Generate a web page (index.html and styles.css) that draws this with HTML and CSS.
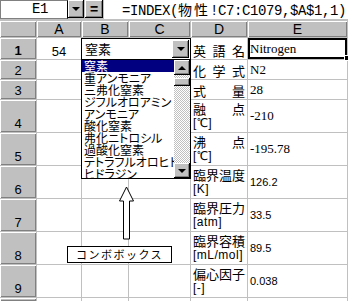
FILE: index.html
```html
<!DOCTYPE html>
<html lang="ja">
<head>
    <meta charset="UTF-8">
    <title>物性</title>
    <link rel="stylesheet" href="styles.css">
</head>
<body>
    <div class="bar">
        <div class="namebox">E1</div>
        <div class="btn drop"><span class="tri-down"></span></div>
        <div class="btn eq">=</div>
        <div class="formula">=INDEX(<span class="cjk">物性</span>!C7:C1079,$A$1,1)</div>
    </div>

    <div class="sheet">
        <div class="grid">
            <div class="hd"></div>
            <div class="hd">A</div>
            <div class="hd">B</div>
            <div class="hd">C</div>
            <div class="hd">D</div>
            <div class="hd">E</div>

            <div class="rh act">1</div>
            <div class="c num">54</div>
            <div class="c"></div>
            <div class="c"></div>
            <div class="c lbl"><span class="wide">英語名</span></div>
            <div class="c val sel">Nitrogen</div>

            <div class="rh">2</div>
            <div class="c"></div><div class="c"></div><div class="c"></div>
            <div class="c lbl"><span class="wide">化学式</span></div>
            <div class="c val">N2</div>

            <div class="rh">3</div>
            <div class="c"></div><div class="c"></div><div class="c"></div>
            <div class="c lbl">式　　量</div>
            <div class="c val">28</div>

            <div class="rh">4</div>
            <div class="c"></div><div class="c"></div><div class="c"></div>
            <div class="c lbl two">融　　点<span class="unit">[℃]</span></div>
            <div class="c val">-210</div>

            <div class="rh">5</div>
            <div class="c"></div><div class="c"></div><div class="c"></div>
            <div class="c lbl two">沸　　点<span class="unit">[℃]</span></div>
            <div class="c val">-195.78</div>

            <div class="rh">6</div>
            <div class="c"></div><div class="c"></div><div class="c"></div>
            <div class="c lbl two">臨界温度<span class="unit">[K]</span></div>
            <div class="c val sans">126.2</div>

            <div class="rh">7</div>
            <div class="c"></div><div class="c"></div><div class="c"></div>
            <div class="c lbl two">臨界圧力<span class="unit">[atm]</span></div>
            <div class="c val sans">33.5</div>

            <div class="rh">8</div>
            <div class="c"></div><div class="c"></div><div class="c"></div>
            <div class="c lbl two">臨界容積<span class="unit">[mL/mol]</span></div>
            <div class="c val sans">89.5</div>

            <div class="rh">9</div>
            <div class="c"></div><div class="c"></div><div class="c"></div>
            <div class="c lbl two">偏心因子<span class="unit">[-]</span></div>
            <div class="c val sans">0.038</div>

            <div class="rh"></div>
            <div class="c"></div><div class="c"></div><div class="c"></div><div class="c"></div><div class="c"></div>
        </div>

        <!-- fill handle of the active cell -->
        <div class="handle"></div>

        <!-- combo box placed over B1:C1 -->
        <div class="combo">
            <div class="combo-text">窒素</div>
            <div class="btn combo-btn"><span class="tri-down"></span></div>
        </div>
        <div class="list">
            <div class="items">
                <div class="item on">窒素</div>
                <div class="item">重アンモニア</div>
                <div class="item">三弗化窒素</div>
                <div class="item">ジフルオロアミン</div>
                <div class="item">アンモニア</div>
                <div class="item">酸化窒素</div>
                <div class="item">弗化ニトロシル</div>
                <div class="item">過酸化窒素</div>
                <div class="item">テトラフルオロヒドラジン</div>
                <div class="item">ヒドラジン</div>
            </div>
            <div class="scroll">
                <div class="btn sb-btn"><span class="tri-up"></span></div>
                <div class="track">
                    <div class="btn thumb"></div>
                </div>
                <div class="btn sb-btn"><span class="tri-down"></span></div>
            </div>
        </div>

        <svg class="arrow" width="348" height="281" viewBox="0 0 348 281">
            <polygon points="126.5,167 133.5,181 129.5,181 129.5,219 123.5,219 123.5,181 119.5,181"
                     fill="#fff" stroke="#000" stroke-width="1"/>
        </svg>
        <div class="callout">コンボボックス</div>
    </div>
</body>
</html>
```

FILE: styles.css
```css
body {
    margin: 0;
    width: 348px;
    height: 301px;
    overflow: hidden;
    background: #fff;
    font-family: "Noto Sans CJK JP", sans-serif;
    color: #000;
}

/* formula bar */
.bar {
    display: flex;
    height: 20px;
    background: #c0c0c0;
}
.namebox {
    width: 68px;
    height: 19px;
    box-sizing: border-box;
    background: #fff;
    border: 1px solid #808080;
    border-right-color: #000;
    padding-left: 31px;
    font: 14px/17px "Liberation Mono", monospace;
    letter-spacing: -0.4px;
}
.btn {
    background: #c0c0c0;
    box-shadow: inset -1px -1px #000, inset 1px 1px #fff, inset -2px -2px #808080;
    display: flex;
    align-items: center;
    justify-content: center;
    box-sizing: border-box;
}
.drop {
    width: 16px;
    height: 18px;
}
.eq {
    width: 18px;
    height: 18px;
    margin-left: 1px;
    font: bold 14px "Liberation Sans", sans-serif;
}
.formula {
    flex: 1;
    height: 19px;
    margin-left: 1px;
    background: #fff;
    padding-left: 18px;
    font: 14px/19px "Liberation Mono", monospace;
    letter-spacing: -0.4px;
    white-space: nowrap;
}
.formula .cjk {
    font-family: "Noto Sans CJK JP", sans-serif;
    font-size: 14px;
    letter-spacing: 2px;
}
.tri-down, .tri-up {
    width: 0;
    height: 0;
    border-left: 4px solid transparent;
    border-right: 4px solid transparent;
}
.tri-down {
    border-top: 4px solid #000;
}
.tri-up {
    border-bottom: 4px solid #000;
}

/* sheet */
.sheet {
    position: relative;
    height: 281px;
    overflow: hidden;
}
.grid {
    display: grid;
    grid-template-columns: 36px 44px 46px 61px 56px 99px;
    grid-template-rows: 16px 21px 19px 19px repeat(6, 32px) 3px;
    gap: 1px;
    padding: 1px 1px 0 0;
    width: 348px;
    box-sizing: border-box;
    background: #c0c0c0;
}
.hd, .rh {
    background: #c0c0c0;
    box-shadow: inset 1px 1px #fff, inset -1px -1px #808080;
    font: 14px "Liberation Sans", sans-serif;
    display: flex;
    justify-content: center;
}
.hd {
    align-items: center;
    line-height: 16px;
}
.rh {
    align-items: flex-end;
    padding-bottom: 1px;
    font-size: 13px;
    line-height: 15px;
    box-shadow: inset 1px 1px #fff, inset -1px -1px #808080, inset 1px 0 #808080;
}
.rh.act {
    font-weight: bold;
}
.c {
    background: #fff;
    display: flex;
    align-items: center;
    overflow: hidden;
    white-space: nowrap;
}
.num {
    justify-content: center;
    font: 13px "Liberation Sans", sans-serif;
    padding-top: 6px;
}
.lbl {
    padding-left: 2px;
    font-size: 13px;
    line-height: 16px;
    align-items: flex-end;
}
.wide {
    display: block;
    width: 52px;
    text-align: justify;
    text-align-last: justify;
}
.lbl.two {
    flex-direction: column;
    align-items: flex-start;
    justify-content: flex-start;
    line-height: 15px;
    padding-top: 1px;
}
.unit {
    font: 12px/15px "Liberation Sans", sans-serif;
    letter-spacing: 0.5px;
}
.val {
    padding-left: 2px;
    font: 13px "Liberation Serif", serif;
}
.val.sans {
    font: 11px "Liberation Sans", sans-serif;
}
.sel {
    border: 2px solid #000;
    padding-left: 0;
}
.handle {
    position: absolute;
    left: 344px;
    top: 35px;
    width: 4px;
    height: 4px;
    background: #000;
    border: 1px solid #fff;
}

/* combo box */
.combo {
    position: absolute;
    left: 81px;
    top: 18px;
    width: 110px;
    height: 22px;
    box-sizing: border-box;
    border: 1px solid #000;
    background: #fff;
    display: flex;
    padding: 1px;
}
.combo-text {
    flex: 1;
    padding-left: 2px;
    font-size: 13px;
    line-height: 18px;
}
.combo-btn {
    width: 17px;
    height: 18px;
}
.list {
    position: absolute;
    left: 81px;
    top: 39px;
    width: 110px;
    height: 120px;
    box-sizing: border-box;
    border: 1px solid #000;
    background: #fff;
    display: flex;
}
.items {
    flex: 1;
    overflow: hidden;
}
.item {
    height: 12px;
    line-height: 12px;
    padding-left: 2px;
    font-size: 12px;
    font-feature-settings: "palt";
    white-space: nowrap;
}
.item.on {
    background: #000080;
    color: #fff;
}
.scroll {
    width: 16px;
    display: flex;
    flex-direction: column;
}
.sb-btn {
    height: 15px;
}
.track {
    flex: 1;
    background: repeating-conic-gradient(#c0c0c0 0 25%, #fff 0 50%) 0 0 / 2px 2px;
    padding-top: 3px;
}
.thumb {
    height: 8px;
}

/* annotation */
.arrow {
    position: absolute;
    left: 0;
    top: 0;
    pointer-events: none;
}
.callout {
    position: absolute;
    left: 67px;
    top: 226px;
    width: 105px;
    height: 17px;
    box-sizing: border-box;
    border: 1px solid #000;
    background: #fff;
    text-align: center;
    font-size: 11px;
    line-height: 15px;
    letter-spacing: 1.5px;
}
```
